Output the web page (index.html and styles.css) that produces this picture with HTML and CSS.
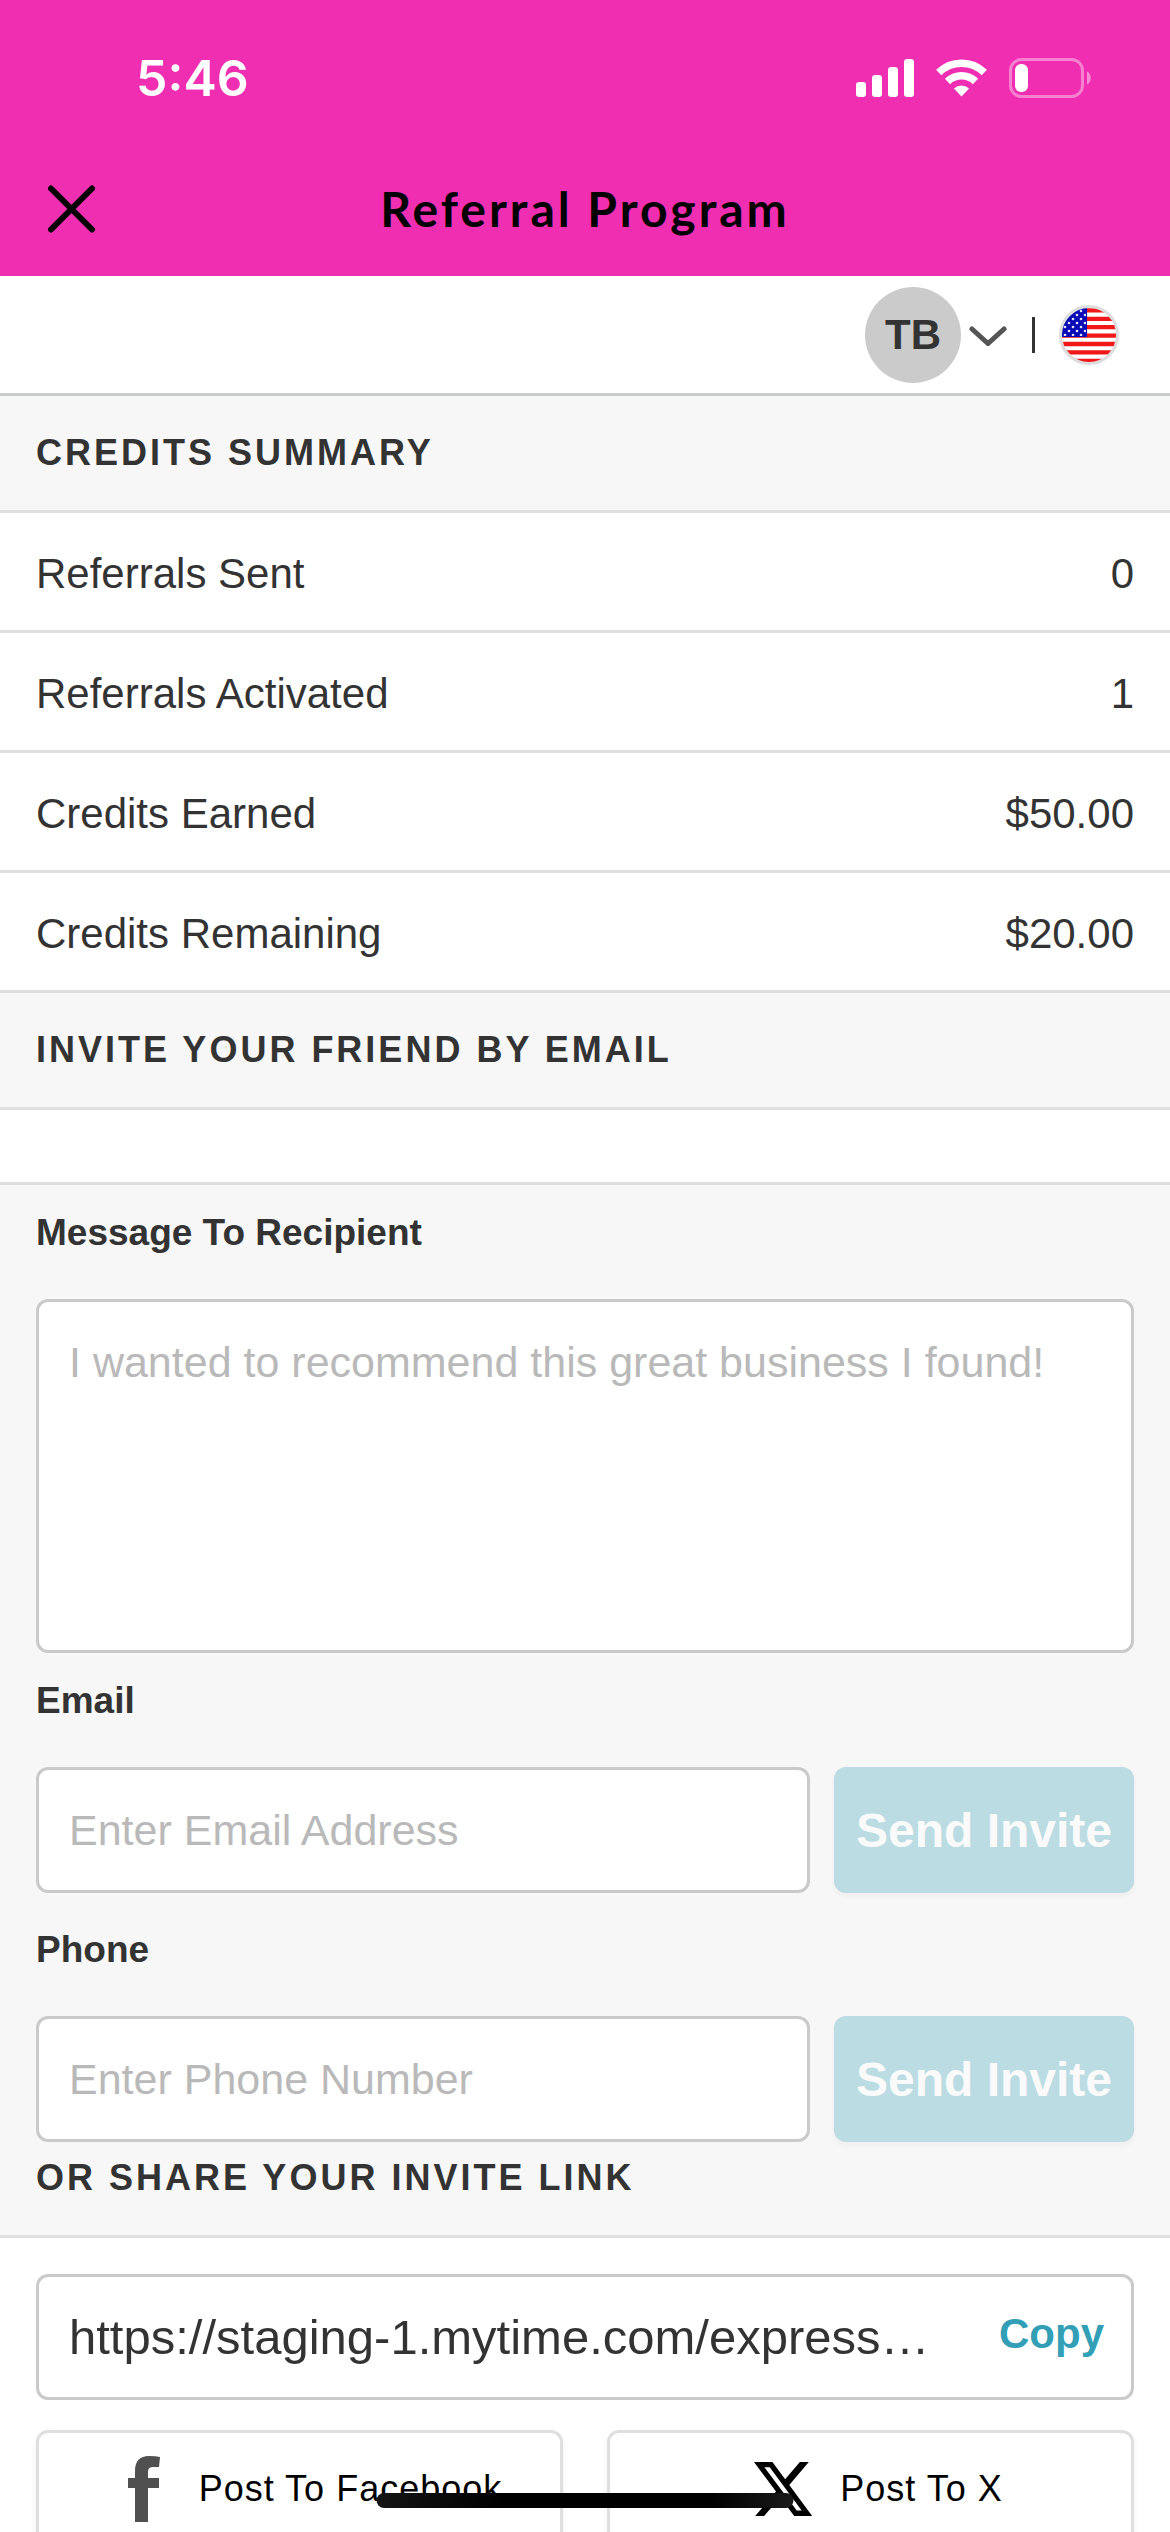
FILE: index.html
```html
<!DOCTYPE html>
<html lang="en">
<head>
<meta charset="utf-8">
<meta name="viewport" content="width=device-width">
<title>Referral Program</title>
<link rel="stylesheet" href="styles.css">
</head>
<body>
<div class="app">
  <header class="top">
    <div class="status">
      <span class="time">5:46</span>
      <div class="status-icons">
        <svg width="58" height="38" viewBox="0 0 58 38" fill="#fff" aria-hidden="true">
          <rect x="0" y="23" width="10" height="15" rx="3"/><rect x="16" y="16" width="10" height="22" rx="3"/><rect x="32" y="8" width="10" height="30" rx="3"/><rect x="48" y="0" width="10" height="38" rx="3"/>
        </svg>
        <svg width="51" height="38" viewBox="0 0 51 38" fill="none" stroke="#fff" aria-hidden="true">
          <path d="M2.700 13.500a32.500 32.500 0 0 1 45.600 0" stroke-width="7.500"/>
          <path d="M11.500 22.500a20 20 0 0 1 28 0" stroke-width="7.500"/>
          <path d="M25.500 37.500l-7.600-8a11 11 0 0 1 15.200 0z" fill="#fff" stroke="none"/>
        </svg>
        <svg width="83" height="40" viewBox="0 0 83 40" aria-hidden="true">
          <rect x="1.500" y="1.500" width="72" height="37" rx="11" fill="none" stroke="#fff" stroke-opacity=".4" stroke-width="3"/>
          <rect x="6" y="6" width="13" height="28" rx="6" fill="#fff"/>
          <path d="M78 13.500c5 2 5 11 0 13z" fill="#fff" fill-opacity=".45"/>
        </svg>
      </div>
    </div>
    <div class="titlebar">
      <button class="close" type="button" aria-label="Close">
        <svg width="48" height="48" viewBox="0 0 48 48" stroke="#000" stroke-width="6" stroke-linecap="round"><path d="M3 3.500L44 44.500M44 3.500L3 44.500"/></svg>
      </button>
      <h1>Referral Program</h1>
    </div>
  </header>

  <main class="content">
    <div class="account">
      <button class="user" type="button" aria-label="Account menu">
        <span class="avatar">TB</span>
        <svg width="40" height="22" viewBox="0 0 40 22" fill="none" stroke="#555" stroke-width="5" stroke-linecap="round" aria-hidden="true"><path d="M4 5l16 14.500L36 5"/></svg>
      </button>
      <span class="divider"></span>
      <button class="language" type="button" aria-label="Language: English (US)">
        <svg width="60" height="60" viewBox="0 0 60 60" aria-hidden="true">
          <defs>
            <clipPath id="disc"><circle cx="30" cy="30" r="28"/></clipPath>
            <pattern id="stars" width="8" height="8" patternUnits="userSpaceOnUse"><circle cx="2" cy="2" r="1.300" fill="#dfe3ff"/><circle cx="6" cy="6" r="1.300" fill="#dfe3ff"/></pattern>
          </defs>
          <g clip-path="url(#disc)">
            <path fill="#fff" d="M0 0h60v60H0z"/>
            <path stroke="#f01818" stroke-width="4.300" d="M0 5.300h60M0 13.800h60M0 22.200h60M0 30.600h60M0 39h60M0 47.400h60M0 55.800h60"/>
            <path fill="#0a0ab4" d="M0 0h28v32H0z"/>
            <path fill="url(#stars)" d="M2 2h25v29H2z"/>
          </g>
          <circle cx="30" cy="30" r="28.500" fill="none" stroke="#ddd" stroke-width="3"/>
        </svg>
      </button>
    </div>

    <section>
      <h2 class="section-title">CREDITS SUMMARY</h2>
      <dl class="summary">
        <div class="row"><dt>Referrals Sent</dt><dd>0</dd></div>
        <div class="row"><dt>Referrals Activated</dt><dd>1</dd></div>
        <div class="row"><dt>Credits Earned</dt><dd>$50.00</dd></div>
        <div class="row"><dt>Credits Remaining</dt><dd>$20.00</dd></div>
      </dl>
    </section>

    <h2 class="section-title">INVITE YOUR FRIEND BY EMAIL</h2>
    <div class="spacer"></div>

    <form class="invite">
      <label for="message">Message To Recipient</label>
      <textarea id="message" placeholder="I wanted to recommend this great business I found!"></textarea>
      <label for="email">Email</label>
      <div class="field">
        <input id="email" type="email" placeholder="Enter Email Address">
        <button class="send" type="button">Send Invite</button>
      </div>
      <label class="later" for="phone">Phone</label>
      <div class="field">
        <input id="phone" type="tel" placeholder="Enter Phone Number">
        <button class="send" type="button">Send Invite</button>
      </div>
      <h2 class="share-title">OR SHARE YOUR INVITE LINK</h2>
    </form>

    <section class="share">
      <div class="link-box">
        <input type="text" readonly aria-label="Invite link" value="https://staging-1.mytime.com/express…">
        <button class="copy" type="button">Copy</button>
      </div>
      <div class="networks">
        <button class="network" type="button">
          <svg width="90" height="66" viewBox="0 0 90 66" aria-hidden="true"><path fill="#505050" d="M38 66V32h-7v-10h7v-7C38 5 43 0 52 0q7 0 11 1l-1 10h-5c-4 0-6 1-6 5v6h11v10H51v34z"/></svg>
          Post To Facebook
        </button>
        <button class="network" type="button">
          <svg width="90" height="54" viewBox="0 0 90 54" aria-hidden="true"><path transform="translate(12.600 -6.200) scale(2.700 2.770)" d="M18.244 2.250h3.308l-7.227 8.260 8.502 11.240H16.170l-5.214-6.817L4.990 21.750H1.680l7.730-8.835L1.254 2.250H8.080l4.713 6.231zm-1.161 17.520h1.833L7.084 4.126H5.117z"/></svg>
          Post To X
        </button>
      </div>
    </section>
  </main>
  <div class="home-indicator"></div>
</div>
</body>
</html>
```

FILE: styles.css
```css
* { box-sizing: border-box; }

body {
  margin: 0;
  background: #fff;
  color: #333;
  font-family: "Liberation Sans", Arial, sans-serif;
  font-size: 42px;
}

button, input, textarea {
  margin: 0;
  font-family: inherit;
  color: inherit;
}

button {
  padding: 0;
  border: 0;
  background: none;
}

svg { display: block; flex: none; }

h1, h2, dl, dd { margin: 0; }

.app {
  position: relative;
  display: flex;
  flex-direction: column;
  height: 100vh;
  overflow: hidden;
}

/* Header */
.top {
  flex: none;
  background: #f02eb2;
}

.status {
  display: flex;
  justify-content: space-between;
  align-items: center;
  height: 156px;
  padding: 0 78px 0 136px;
}

.time {
  color: #fff;
  font-family: Inter, sans-serif;
  font-size: 50px;
  font-weight: 600;
}

.status-icons {
  display: flex;
  align-items: center;
  gap: 22px;
}

.titlebar {
  display: grid;
  grid-template-columns: 48px 1fr 48px;
  align-items: center;
  height: 120px;
  padding: 0 48px 14px;
}

.titlebar h1 {
  color: #000;
  font-family: Lato, sans-serif;
  font-size: 48px;
  font-weight: 700;
  letter-spacing: 3px;
  line-height: 60px;
  text-align: center;
}

.content {
  flex: 1;
  min-height: 0;
  overflow-y: auto;
  scrollbar-width: none;
}

/* Account bar */
.account {
  display: flex;
  justify-content: flex-end;
  align-items: center;
  gap: 24px;
  height: 120px;
  padding-right: 51px;
  border-bottom: 3px solid #c9cbca;
}

.user {
  display: flex;
  align-items: center;
  gap: 7px;
}

.avatar {
  display: grid;
  place-items: center;
  width: 96px;
  height: 96px;
  border-radius: 50%;
  background: #cbcbcb;
  font-size: 42px;
  font-weight: 700;
}

.divider {
  width: 3px;
  height: 36px;
  background: #333;
}

/* Summary */
.section-title, .share-title {
  font-size: 36px;
  font-weight: 700;
  letter-spacing: 3px;
  line-height: 48px;
}

.section-title {
  padding: 33px 36px;
  border-bottom: 3px solid #dfdfdf;
  background: #f7f7f7;
}

.row {
  display: flex;
  justify-content: space-between;
  align-items: center;
  padding: 37px 36px 32px;
  border-bottom: 3px solid #dfdfdf;
  line-height: 48px;
}

.spacer {
  height: 75px;
  border-bottom: 3px solid #dfdfdf;
}

/* Invite form */
.invite {
  padding: 0 36px;
  border-bottom: 3px solid #dfdfdf;
  background: #f7f7f7;
}

.invite label {
  display: block;
  padding: 24px 0 42px;
  font-size: 37px;
  font-weight: 700;
  line-height: 48px;
}

.invite .later { padding-top: 33px; }

.invite textarea, .invite input {
  display: block;
  width: 100%;
  border: 3px solid #cacaca;
  border-radius: 12px;
  background: #fff;
  font-size: 43px;
}

.invite textarea {
  height: 354px;
  padding: 36px 30px;
  line-height: 48px;
  resize: none;
}

.field {
  display: grid;
  grid-template-columns: 1fr 300px;
  gap: 24px;
}

.invite input {
  height: 126px;
  padding: 0 30px;
}

::placeholder { color: #b9b9b9; opacity: 1; }

.send {
  border-radius: 12px;
  background: #bbdce3;
  box-shadow: 0 3px 6px rgba(0, 0, 0, .04);
  color: #fafafa;
  font-size: 48px;
  font-weight: 700;
}

.share-title { padding: 12px 0 33px; }

/* Share link */
.share {
  display: grid;
  gap: 30px;
  padding: 36px;
}

.link-box {
  display: flex;
  align-items: center;
  height: 126px;
  padding: 0 27px 0 30px;
  border: 3px solid #cacaca;
  border-radius: 12px;
}

.link-box input {
  flex: 1;
  min-width: 0;
  padding: 0;
  border: 0;
  background: none;
  font-size: 49px;
  text-overflow: ellipsis;
}

.copy {
  padding-bottom: 6px;
  color: #329fb7;
  font-size: 42px;
  font-weight: 700;
}

.networks {
  display: grid;
  grid-template-columns: 1fr 1fr;
  gap: 44px;
}

.network {
  display: flex;
  justify-content: center;
  align-items: center;
  gap: 12px;
  height: 117px;
  border: 3px solid #dfdfdf;
  border-radius: 12px;
  background: #fff;
  box-shadow: 0 3px 6px rgba(0, 0, 0, .06);
  color: #000;
  font-size: 36px;
  letter-spacing: 1px;
}

.home-indicator {
  position: absolute;
  bottom: 24px;
  left: 50%;
  width: 417px;
  height: 15px;
  border-radius: 8px;
  background: linear-gradient(90deg, #151515, #000 30%, #000 80%, #1a1a1a);
  transform: translateX(-50%);
}
```
